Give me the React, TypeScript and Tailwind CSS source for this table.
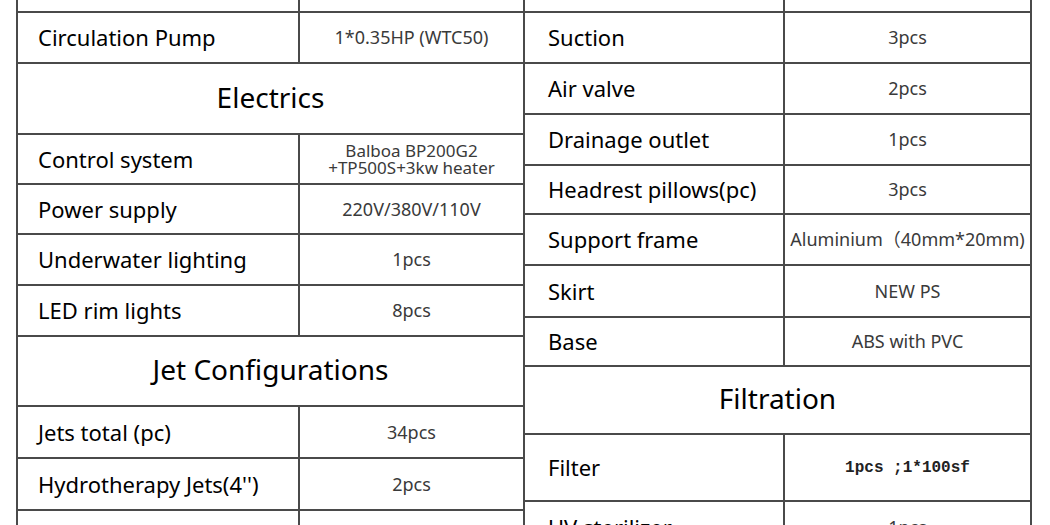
type Row =
  | {kind: 'stub'; h: string}
  | {kind: 'head'; title: string; h: string}
  | {kind: 'item'; label: string; value: string; h: string; mono?: boolean; small?: boolean};

const leftRows: Row[] = [
  {kind: 'stub', h: 'h-[13px]'},
  {kind: 'item', label: 'Circulation Pump', value: '1*0.35HP (WTC50)', h: 'h-[51px]'},
  {kind: 'head', title: 'Electrics', h: 'h-[71px]'},
  {kind: 'item', label: 'Control system', value: 'Balboa BP200G2\n+TP500S+3kw heater', h: 'h-[50px]', small: true},
  {kind: 'item', label: 'Power supply', value: '220V/380V/110V', h: 'h-[50px]'},
  {kind: 'item', label: 'Underwater lighting', value: '1pcs', h: 'h-[51px]'},
  {kind: 'item', label: 'LED rim lights', value: '8pcs', h: 'h-[51px]'},
  {kind: 'head', title: 'Jet Configurations', h: 'h-[70px]'},
  {kind: 'item', label: 'Jets total (pc)', value: '34pcs', h: 'h-[52px]'},
  {kind: 'item', label: "Hydrotherapy Jets(4'')", value: '2pcs', h: 'h-[52px]'},
  {kind: 'item', label: "Hydrotherapy Jets(2'')", value: '4pcs', h: 'h-[52px]'},
];

const rightRows: Row[] = [
  {kind: 'stub', h: 'h-[13px]'},
  {kind: 'item', label: 'Suction', value: '3pcs', h: 'h-[51px]'},
  {kind: 'item', label: 'Air valve', value: '2pcs', h: 'h-[51px]'},
  {kind: 'item', label: 'Drainage outlet', value: '1pcs', h: 'h-[51px]'},
  {kind: 'item', label: 'Headrest pillows(pc)', value: '3pcs', h: 'h-[49px]'},
  {kind: 'item', label: 'Support frame', value: 'Aluminium（40mm*20mm)', h: 'h-[51px]'},
  {kind: 'item', label: 'Skirt', value: 'NEW PS', h: 'h-[52px]'},
  {kind: 'item', label: 'Base', value: 'ABS with PVC', h: 'h-[49px]'},
  {kind: 'head', title: 'Filtration', h: 'h-[68px]'},
  {kind: 'item', label: 'Filter', value: '1pcs ;1*100sf', h: 'h-[67px]', mono: true},
  {kind: 'item', label: 'UV sterilizer', value: '1pcs', h: 'h-[52px]'},
];

function SpecTable({rows, cols, pad}: {rows: Row[]; cols: string; pad: string}) {
  return (
    <div className="flex flex-col">
      {rows.map((r, i) => {
        if (r.kind === 'head') {
          return (
            <div key={i} className={`${r.h} flex shrink-0 items-center justify-center border-b-2 border-[#4a4a4a] pb-1 text-[28px] text-black`}>
              {r.title}
            </div>
          );
        }
        const label = r.kind === 'item' ? r.label : '';
        const value = r.kind === 'item' ? r.value : '';
        const mono = r.kind === 'item' && r.mono;
        const small = r.kind === 'item' && r.small;
        return (
          <div key={i} className={`${r.h} grid shrink-0 border-b-2 border-[#4a4a4a] ${cols}`}>
            <div className={`flex items-center border-r-2 border-[#4a4a4a] ${pad} text-[22px] text-black`}>{label}</div>
            <div
              className={
                mono
                  ? "flex items-center justify-center font-['Liberation_Mono',monospace] text-[16px] font-bold text-[#222]"
                  : small
                    ? 'flex items-center justify-center whitespace-pre-line text-center text-[17px] leading-[17px] text-[#3a3a3a]'
                    : 'flex items-center justify-center text-[18px] text-[#3a3a3a]'
              }
            >
              {value}
            </div>
          </div>
        );
      })}
    </div>
  );
}

export default function App() {
  return (
    <div className="flex h-[525px] w-[1050px] overflow-hidden bg-white pl-4 font-['Noto_Sans','Noto_Sans_CJK_SC',sans-serif]">
      <div className="w-[509px] shrink-0 border-x-2 border-[#4a4a4a]">
        <SpecTable rows={leftRows} cols="grid-cols-[282px_1fr]" pad="pl-[20px]" />
      </div>
      <div className="w-[507px] shrink-0 border-r-2 border-[#4a4a4a]">
        <SpecTable rows={rightRows} cols="grid-cols-[260px_1fr]" pad="pl-[23px]" />
      </div>
    </div>
  );
}
